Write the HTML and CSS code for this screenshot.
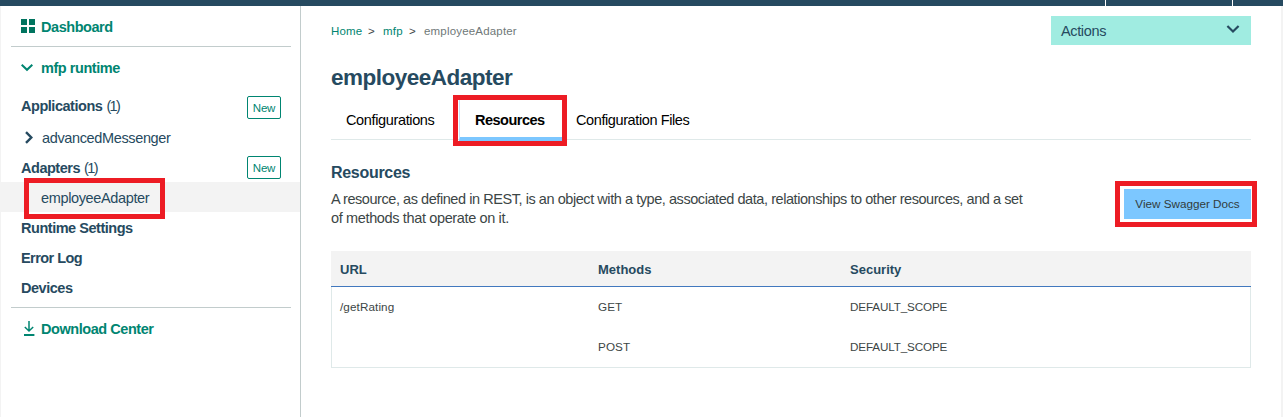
FILE: index.html
```
<!DOCTYPE html>
<html lang="en">
<head>
<meta charset="utf-8">
<title>employeeAdapter</title>
<link rel="stylesheet" href="styles.css">
</head>
<body>
<header class="topbar"><span class="topbar-rest"></span><span class="topbar-item"></span><span class="topbar-user"></span></header>
<div class="layout">
  <nav class="sidebar">
    <a class="nav-row nav-link dashboard">
      <svg class="nav-icon" width="20" height="16" viewBox="0 0 20 16"><path fill="#00745f" d="M0 0h6v6H0zM8 0h6v6H8zM0 8h6v6H0zM8 8h6v6H8z"/></svg>
      <span>Dashboard</span>
    </a>
    <a class="nav-row nav-link runtime">
      <svg class="nav-icon" width="20" height="16" viewBox="0 0 20 16"><path fill="none" stroke="#008571" stroke-width="2" d="M.7 4.7 6 9.8l5.3-5.1"/></svg>
      <span>mfp runtime</span>
    </a>
    <div class="nav-row nav-head apps"><span>Applications</span><span class="count">(1)</span><button class="new-btn">New</button></div>
    <a class="nav-row nav-sub">
      <svg class="nav-icon" width="21" height="16" viewBox="0 0 21 16"><path fill="none" stroke="#264a60" stroke-width="2.4" d="m5 2.2 5.3 5.3L5 12.8"/></svg>
      <span>advancedMessenger</span>
    </a>
    <div class="nav-row nav-head adapters"><span>Adapters</span><span class="count">(1)</span><button class="new-btn">New</button></div>
    <a class="nav-row nav-sub selected"><span>employeeAdapter</span><i class="marker marker-nav"></i></a>
    <a class="nav-row nav-head lower"><span>Runtime Settings</span></a>
    <a class="nav-row nav-head lower"><span class="tight">Error Log</span></a>
    <a class="nav-row nav-head lower"><span>Devices</span></a>
    <a class="nav-row nav-link download">
      <svg class="nav-icon" width="20" height="16" viewBox="0 0 20 16"><g fill="none" stroke="#008571"><path stroke-width="1.5" d="M8 0v10M3.8 6 8 10l4.2-4"/><path stroke-width="2" d="M3 14h10.4"/></g></svg>
      <span>Download Center</span>
    </a>
  </nav>
  <main class="content">
    <div class="toprow">
      <div class="crumbs"><a class="crumb-home">Home</a><span class="sep">&gt;</span><a class="crumb-mfp">mfp</a><span class="sep">&gt;</span><span class="current">employeeAdapter</span></div>
      <div class="actions"><span>Actions</span>
        <svg width="14" height="10" viewBox="0 0 14 10"><path fill="none" stroke="#264a60" stroke-width="2.2" d="m1.4 2 5.6 5.5L12.6 2"/></svg>
      </div>
    </div>
    <h1 class="title">employeeAdapter</h1>
    <div class="tabs">
      <a class="tab tab-config">Configurations</a>
      <a class="tab active">Resources<i class="marker marker-tab"></i></a>
      <a class="tab tab-files">Configuration Files</a>
    </div>
    <section class="intro">
      <div class="intro-text">
        <h2 class="heading">Resources</h2>
        <p class="description"><span class="line-one">A resource, as defined in REST, is an object with a type, associated data, relationships to other resources, and a set</span><br>of methods that operate on it.</p>
      </div>
      <button class="swagger">View Swagger Docs<i class="marker marker-swagger"></i></button>
    </section>
    <div class="table">
      <div class="tr thead"><span>URL</span><span>Methods</span><span>Security</span></div>
      <div class="tr"><span>/getRating</span><span>GET</span><span class="scope">DEFAULT_SCOPE</span></div>
      <div class="tr"><span></span><span>POST</span><span class="scope">DEFAULT_SCOPE</span></div>
    </div>
  </main>
</div>
</body>
</html>
```
FILE: styles.css
```
* { box-sizing: border-box; }
body {
  margin: 0;
  height: 417px;
  overflow: hidden;
  display: flex;
  flex-direction: column;
  background: #fff;
  font-family: "Liberation Sans", sans-serif;
  font-size: 14.5px;
  letter-spacing: -0.36px;
  color: #3c4646;
}
h1, h2, p { margin: 0; }
button { font-family: inherit; padding: 0; }
svg { display: block; }
.topbar { display: flex; gap: 1px; height: 6px; flex: none; }
.topbar span { background: #264a60; }
.topbar-rest { width: 1105px; }
.topbar-item { width: 126px; }
.topbar-user { flex: 1; }
.layout {
  flex: 1;
  display: flex;
  border-left: 1px solid #f3f3f3;
  border-right: 2px solid #f3f3f3;
}
.sidebar {
  width: 300px;
  flex: none;
  border-right: 1px solid #c2cccc;
}
.nav-row {
  position: relative;
  display: flex;
  align-items: center;
  height: 30px;
  padding-left: 20px;
  white-space: nowrap;
}
.nav-icon { flex: none; }
.nav-link { color: #008571; font-weight: bold; letter-spacing: -0.45px; }
.dashboard { height: 41px; margin: 0 9px 0 10px; padding: 2px 0 0 10px; border-bottom: 1px solid #c2cccc; }
.runtime { height: 42px; }
.nav-head { color: #264a60; font-weight: bold; letter-spacing: -0.47px; }
.tight { letter-spacing: -0.55px; }
.count { margin-left: 4px; font-weight: normal; letter-spacing: -1.6px; }
.apps { height: 34px; }
.adapters { height: 30px; padding-top: 2px; }
.apps + .nav-sub { height: 29px; }
.nav-sub { color: #264a60; }
.selected { margin-left: -1px; padding: 2px 0 0 41px; background: #f3f3f3; }
.lower { padding-top: 2px; }
.new-btn {
  width: 34px;
  height: 23px;
  margin: 3px 19px 0 auto;
  border: 1px solid #008571;
  border-radius: 2px;
  background: #fff;
  color: #008571;
  font-size: 11.5px;
  letter-spacing: -0.2px;
}
.adapters .new-btn { margin: 0 19px 2px auto; padding-top: 1px; }
.download { height: 43px; margin: 5px 9px 0 10px; padding-left: 10px; border-top: 1px solid #c2cccc; }
.content { flex: 1; padding: 10px 30px 0; }
.toprow { display: flex; justify-content: space-between; }
.crumbs { display: flex; align-items: center; height: 30px; font-size: 11.5px; letter-spacing: 0.18px; }
.crumbs a { color: #008571; width: 32px; }
.crumbs .crumb-mfp { width: 20px; }
.sep { width: 8px; margin: 0 7px 0 5px; }
.crumb-mfp + .sep { margin-left: 6px; }
.current { color: #6f7878; }
.actions {
  display: flex;
  align-items: center;
  justify-content: space-between;
  width: 200px;
  height: 29px;
  padding: 0 11px 0 10px;
  background: #a0ece1;
  color: #264a60;
}
.actions svg { margin-top: -3px; }
.title { height: 52px; line-height: 64px; font-size: 22.5px; letter-spacing: -0.5px; color: #264a60; }
.tabs { display: flex; height: 42px; border-bottom: 1px solid #dfe9e9; color: #000; white-space: nowrap; }
.tab { position: relative; height: 43px; line-height: 44px; }
.tab-config { width: 128px; padding-left: 15px; }
.active {
  width: 103px;
  padding-left: 15px;
  border-left: 1px solid #c8e4fc;
  border-bottom: 4px solid #7cc7ff;
  font-weight: bold;
  letter-spacing: -0.5px;
}
.tab-files { padding-left: 14px; letter-spacing: -0.4px; }
.intro { display: flex; justify-content: space-between; height: 111px; }
.heading { margin-top: 22px; font-size: 16px; line-height: 22px; letter-spacing: -0.3px; color: #264a60; }
.description { margin-top: 6px; line-height: 19px; white-space: nowrap; }
.line-one { letter-spacing: -0.44px; }
.swagger {
  position: relative;
  width: 127px;
  height: 30px;
  margin-top: 49px;
  padding-bottom: 2px;
  border: 0;
  background: #7cc7ff;
  color: #323c3c;
  font-size: 11.7px;
  letter-spacing: 0;
}
.table { height: 117px; border: solid #dfe9e9; border-width: 0 1px 1px; font-size: 11.7px; letter-spacing: 0.1px; }
.tr {
  display: grid;
  grid-template-columns: 258px 252px 1fr;
  align-items: center;
  height: 40px;
  padding: 0 0 2px 8px;
}
.thead {
  height: 36px;
  margin: 0 -1px;
  padding: 2px 0 0 9px;
  border-bottom: 1px solid #4178be;
  background: #f3f3f3;
  color: #264a60;
  font-size: 13px;
  font-weight: bold;
  letter-spacing: 0;
}
.scope { letter-spacing: -0.15px; }
.marker { position: absolute; border: 5px solid #ed1c24; pointer-events: none; }
.marker-nav { left: 24px; top: -4px; width: 141px; height: 41px; }
.marker-tab { left: -7px; top: -3px; width: 114px; height: 51px; }
.marker-swagger { left: -9px; top: -8px; width: 142px; height: 46px; }
```
